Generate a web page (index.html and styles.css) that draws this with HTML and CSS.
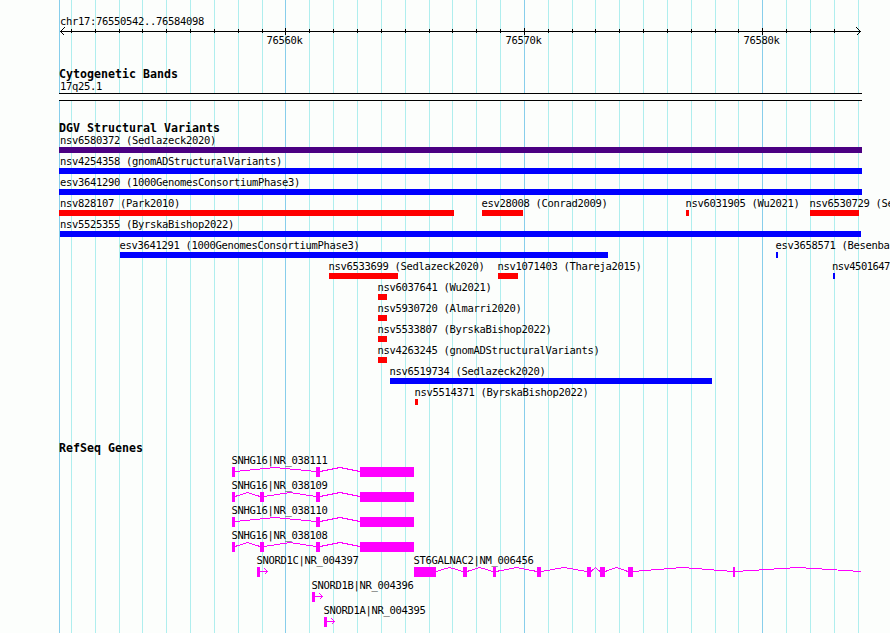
FILE: index.html
```
<!DOCTYPE html>
<html lang="en">
<head>
    <meta charset="UTF-8">
    <meta name="viewport" content="width=device-width, initial-scale=1.0">
    <title>chr17:76550542..76584098</title>
    <link rel="stylesheet" href="styles.css">
</head>
<body>
<div class="panel">

    <!-- vertical grid, 1k minor / 10k major -->
    <svg class="grid" width="890" height="633" viewBox="0 0 890 633">
        <path class="minor" d="M71.5 0v633M95.5 0v633M119.5 0v633M142.5 0v633M166.5 0v633M190.5 0v633M214.5 0v633M238.5 0v633M262.5 0v633M309.5 0v633M333.5 0v633M357.5 0v633M381.5 0v633M405.5 0v633M429.5 0v633M452.5 0v633M476.5 0v633M500.5 0v633M548.5 0v633M572.5 0v633M595.5 0v633M619.5 0v633M643.5 0v633M667.5 0v633M691.5 0v633M715.5 0v633M738.5 0v633M786.5 0v633M810.5 0v633M834.5 0v633M858.5 0v633"/>
        <path class="major" d="M59.5 0v633M285.5 0v633M524.5 0v633M762.5 0v633"/>
    </svg>

    <div class="track">
        <svg width="890" height="66" viewBox="0 0 890 66">
            <text x="60" y="25">chr17:76550542..76584098</text>
            <path class="axis" d="M60 31.5H861M64.5 27.5L60.5 31.5L64.5 35.5M856.5 27.5L860.5 31.5L856.5 35.5"/>
            <path class="axis" d="M71.5 29v4M95.5 29v4M119.5 29v4M142.5 29v4M166.5 29v4M190.5 29v4M214.5 29v4M238.5 29v4M262.5 29v4M309.5 29v4M333.5 29v4M357.5 29v4M381.5 29v4M405.5 29v4M429.5 29v4M452.5 29v4M476.5 29v4M500.5 29v4M548.5 29v4M572.5 29v4M595.5 29v4M619.5 29v4M643.5 29v4M667.5 29v4M691.5 29v4M715.5 29v4M738.5 29v4M786.5 29v4M810.5 29v4M834.5 29v4"/>
            <path class="axis" d="M285.5 28v7M524.5 28v7M762.5 28v7"/>
            <text x="266.4" y="44">76560k</text>
            <text x="505.4" y="44">76570k</text>
            <text x="743.4" y="44">76580k</text>
        </svg>
    </div>

    <div class="track">
        <h2>Cytogenetic Bands</h2>
        <svg width="890" height="40" viewBox="0 80 890 40">
            <text x="60" y="90">17q25.1</text>
            <rect class="band" x="59" y="93" width="803" height="8"/>
            <path class="axis" d="M59 93.5H862M59 100.5H862"/>
        </svg>
    </div>

    <div class="track">
        <h2>DGV Structural Variants</h2>
        <svg width="890" height="306" viewBox="0 134 890 306">
            <text x="60" y="144">nsv6580372 (Sedlazeck2020)</text>
            <rect class="complex" x="59" y="147" width="803" height="6"/>

            <text x="60" y="165">nsv4254358 (gnomADStructuralVariants)</text>
            <rect class="gain" x="59" y="168" width="803" height="6"/>

            <text x="60" y="186">esv3641290 (1000GenomesConsortiumPhase3)</text>
            <rect class="gain" x="59" y="189" width="803" height="6"/>

            <text x="60" y="207">nsv828107 (Park2010)</text>
            <rect class="loss" x="59" y="210" width="395" height="6"/>
            <text x="481.4" y="207">esv28008 (Conrad2009)</text>
            <rect class="loss" x="482" y="210" width="41" height="6"/>
            <text x="685.4" y="207">nsv6031905 (Wu2021)</text>
            <rect class="loss" x="686" y="210" width="3" height="6"/>
            <text x="809.4" y="207">nsv6530729 (Se</text>
            <rect class="loss" x="810" y="210" width="49" height="6"/>

            <text x="60" y="228">nsv5525355 (ByrskaBishop2022)</text>
            <rect class="gain" x="60" y="231" width="801" height="6"/>

            <text x="119.4" y="249">esv3641291 (1000GenomesConsortiumPhase3)</text>
            <rect class="gain" x="120" y="252" width="488" height="6"/>
            <text x="775.4" y="249">esv3658571 (Besenba</text>
            <rect class="gain" x="776" y="252" width="2" height="6"/>

            <text x="328.4" y="270">nsv6533699 (Sedlazeck2020)</text>
            <rect class="loss" x="329" y="273" width="69" height="6"/>
            <text x="497.4" y="270">nsv1071403 (Thareja2015)</text>
            <rect class="loss" x="498" y="273" width="20" height="6"/>
            <text x="832" y="270" textLength="58">nsv4501647</text>
            <rect class="gain" x="833" y="273" width="2" height="6"/>

            <text x="377.4" y="291">nsv6037641 (Wu2021)</text>
            <rect class="loss" x="378" y="294" width="9" height="6"/>

            <text x="377.4" y="312">nsv5930720 (Almarri2020)</text>
            <rect class="loss" x="378" y="315" width="9" height="6"/>

            <text x="377.4" y="333">nsv5533807 (ByrskaBishop2022)</text>
            <rect class="loss" x="378" y="336" width="9" height="6"/>

            <text x="377.4" y="354">nsv4263245 (gnomADStructuralVariants)</text>
            <rect class="loss" x="378" y="357" width="9" height="6"/>

            <text x="389.4" y="375">nsv6519734 (Sedlazeck2020)</text>
            <rect class="gain" x="390" y="378" width="322" height="6"/>

            <text x="414.4" y="396">nsv5514371 (ByrskaBishop2022)</text>
            <rect class="loss" x="415" y="399" width="3" height="6"/>
        </svg>
    </div>

    <div class="track">
        <h2>RefSeq Genes</h2>
        <svg width="890" height="179" viewBox="0 454 890 179">
            <text x="231.4" y="464">SNHG16|NR_038111</text>
            <path class="intron" d="M235 471.5L275 467.5L316 471.5M320 471.5L340 467.5L360 471.5"/>
            <path class="exon" d="M232 467h3v10h-3zM316 467h4v10h-4zM360 467h54v10h-54z"/>

            <text x="231.4" y="489">SNHG16|NR_038109</text>
            <path class="intron" d="M235 496.5L247.5 492.5L260 496.5M264 496.5L290 492.5L316 496.5M320 496.5L340 492.5L360 496.5"/>
            <path class="exon" d="M232 492h3v10h-3zM260 492h4v10h-4zM316 492h4v10h-4zM360 492h54v10h-54z"/>

            <text x="231.4" y="514">SNHG16|NR_038110</text>
            <path class="intron" d="M235 521.5L275 517.5L316 521.5M320 521.5L340 517.5L360 521.5"/>
            <path class="exon" d="M232 517h3v10h-3zM316 517h4v10h-4zM360 517h54v10h-54z"/>

            <text x="231.4" y="539">SNHG16|NR_038108</text>
            <path class="intron" d="M235 546.5L247.5 542.5L260 546.5M264 546.5L290 542.5L316 546.5M320 546.5L340 542.5L360 546.5"/>
            <path class="exon" d="M232 542h3v10h-3zM260 542h4v10h-4zM316 542h4v10h-4zM360 542h54v10h-54z"/>

            <text x="256.4" y="564">SNORD1C|NR_004397</text>
            <path class="exon" d="M257 567h3v10h-3z"/>
            <path class="intron" d="M260 571.5H268M264.5 568.5L267.5 571.5L264.5 574.5"/>

            <text x="413.4" y="564">ST6GALNAC2|NM_006456</text>
            <path class="intron" d="M436 571.5L449.5 567.5L463 571.5M467 571.5L479.5 567.5L493 571.5M496 571.5L516.5 567.5L537 571.5M541 571.5L564 567.5L587 571.5M591 571.5L595.5 567.5L600 571.5M605 571.5L616.5 567.5L628 571.5M633 571.5L682.5 567.5L733 571.5M735 571.5L798 567.5L861 571.5"/>
            <path class="exon" d="M414 567h22v10h-22zM463 567h4v10h-4zM493 567h3v10h-3zM537 567h4v10h-4zM587 567h4v10h-4zM600 567h5v10h-5zM628 567h5v10h-5zM733 567h2v10h-2z"/>

            <text x="311.4" y="589">SNORD1B|NR_004396</text>
            <path class="exon" d="M312 592h3v10h-3z"/>
            <path class="intron" d="M315 596.5H323M319.5 593.5L322.5 596.5L319.5 599.5"/>

            <text x="323.4" y="614">SNORD1A|NR_004395</text>
            <path class="exon" d="M324 617h3v10h-3z"/>
            <path class="intron" d="M327 621.5H335M331.5 618.5L334.5 621.5L331.5 624.5"/>
        </svg>
    </div>

</div>
</body>
</html>
```
FILE: styles.css
```
body {
    margin: 0;
    background-color: #fcfefc;
    color: #000;
    font-family: "DejaVu Sans Mono", "Liberation Mono", monospace;
}

.panel {
    position: relative;
    display: flex;
    flex-direction: column;
    width: 890px;
    height: 633px;
    overflow: hidden;
}

.grid {
    position: absolute;
    top: 0;
    left: 0;
}

.track {
    position: relative;
}

svg {
    display: block;
    shape-rendering: crispEdges;
}

h2 {
    margin: 0;
    padding-left: 59px;
    height: 14px;
    line-height: 16px;
    font-size: 11.6px;
    font-weight: bold;
    letter-spacing: 0.015px;
    white-space: nowrap;
}

text {
    font-size: 10.5px;
    letter-spacing: -0.32px;
    fill: #000;
}

path {
    fill: none;
}

.minor { stroke: #afeeee; }
.major { stroke: #87ceeb; }
.axis { stroke: #000; }
.band { fill: #fcfefc; }

.complex { fill: #4b0082; }
.gain { fill: #0000ff; }
.loss { fill: #ff0000; }

.exon { fill: #ff00ff; }
.intron { stroke: #ff00ff; }
```
